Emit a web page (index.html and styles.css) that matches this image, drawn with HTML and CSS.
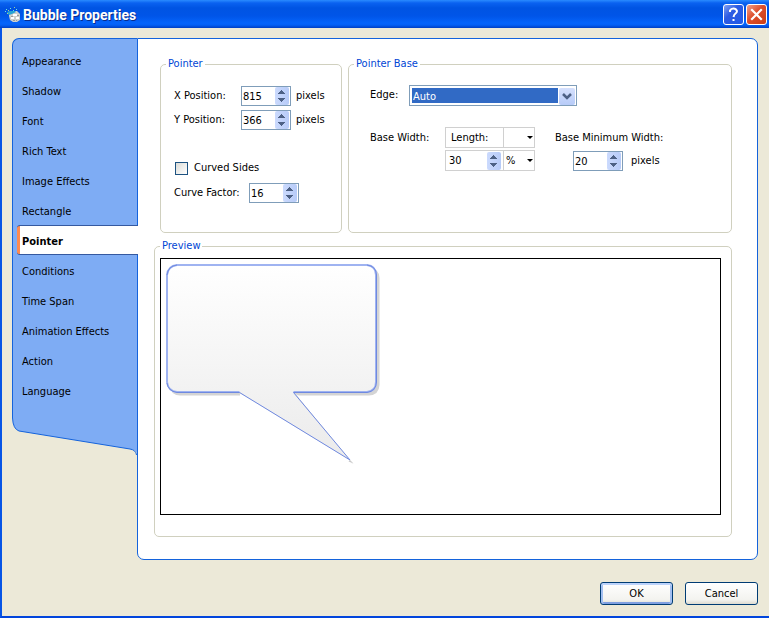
FILE: index.html
```html
<!DOCTYPE html>
<html lang="en">
<head>
<meta charset="utf-8">
<title>Bubble Properties</title>
<link rel="stylesheet" href="styles.css">
</head>
<body>
<svg class="defs" width="0" height="0" aria-hidden="true">
  <symbol id="up" viewBox="0 0 14 9"><path d="M6 3h1v1h1v1h1v1h1v1H3V6h1V5h1V4h1z" fill="#4d6185"/></symbol>
  <symbol id="down" viewBox="0 0 14 9"><path d="M3 2h7v1H9v1H8v1H7v1H6V5H5V4H4V3H3z" fill="#4d6185"/></symbol>
</svg>
<form class="window">
  <header class="titlebar">
    <svg class="app-icon" width="16" height="18" viewBox="0 0 16 18" aria-hidden="true">
      <path d="M4 7l3-2h5l3 3v6l-3 2H8l-3-2-1-4z" fill="#cfd0cc"/>
      <path d="M2 6l3-1h5l1 1-4 2-3 1z" fill="#27a5d5"/>
      <path d="M8 8h4v2H8zM11 11h3v2h-3zM6 11h3v2H6z" fill="#fff"/>
      <path d="M6 10h2v1H6zM12 9h2v1h-2zM8 14h2v1H8zM11 14h1v1h-1z" fill="#9a9c9c"/>
      <path d="M1 3h1v1H1zM5 2h1v1H5zM8 4h1v1H8zM0 5h1v1H0zM11 3h1v1h-1z" fill="#6fe0df"/>
      <path d="M3 4h1v1H3zM9 1h1v1H9zM2 7h1v1H2z" fill="#a8cb91"/>
    </svg>
    <h1>Bubble Properties</h1>
    <button type="button" class="caption" aria-label="Help">
      <svg width="19" height="19" viewBox="0 0 19 19"><path d="M6 7V5.500q1-2 3.500-2T13 6q0 1.500-1.500 2.500T9.500 12M9.500 14v2" fill="none" stroke="#fff" stroke-width="2"/></svg>
    </button>
    <button type="button" class="caption close" aria-label="Close">
      <svg width="19" height="19" viewBox="0 0 19 19"><path d="M5 5l9 9M14 5l-9 9" fill="none" stroke="#fff" stroke-width="2.200" stroke-linecap="square"/></svg>
    </button>
  </header>
  <main class="content">
    <nav class="side">
      <ul>
        <li><a href="#appearance">Appearance</a></li>
        <li><a href="#shadow">Shadow</a></li>
        <li><a href="#font">Font</a></li>
        <li><a href="#rich-text">Rich Text</a></li>
        <li><a href="#image-effects">Image Effects</a></li>
        <li><a href="#rectangle">Rectangle</a></li>
        <li class="active"><a href="#pointer" aria-current="page">Pointer</a></li>
        <li><a href="#conditions">Conditions</a></li>
        <li><a href="#time-span">Time Span</a></li>
        <li><a href="#animation-effects">Animation Effects</a></li>
        <li><a href="#action">Action</a></li>
        <li><a href="#language">Language</a></li>
      </ul>
      <svg class="side-foot" width="125" height="50" viewBox="0 0 125 50" aria-hidden="true">
        <path d="M0.500 0V13Q1 24 7 26L118 44Q125 45 125.500 50V0" fill="#7eacf4"/>
        <path d="M0.500 0V13Q1 24 7 26L118 44Q124 45 124.500 50" fill="none" stroke="#1463dc"/>
      </svg>
    </nav>
    <section class="panel" id="pointer">
      <div class="groups">
        <fieldset class="group pointer">
          <legend>Pointer</legend>
          <div class="row">
            <label class="name" for="x">X Position:</label>
            <span class="spin"><input id="x" value="815"><span class="arrows"><button type="button" aria-label="Increase"><svg width="14" height="9"><use href="#up"/></svg></button><button type="button" aria-label="Decrease"><svg width="14" height="9"><use href="#down"/></svg></button></span></span>
            <span class="unit">pixels</span>
          </div>
          <div class="row">
            <label class="name" for="y">Y Position:</label>
            <span class="spin"><input id="y" value="366"><span class="arrows"><button type="button" aria-label="Increase"><svg width="14" height="9"><use href="#up"/></svg></button><button type="button" aria-label="Decrease"><svg width="14" height="9"><use href="#down"/></svg></button></span></span>
            <span class="unit">pixels</span>
          </div>
          <div class="row check">
            <input type="checkbox" id="curved"><label for="curved">Curved Sides</label>
          </div>
          <div class="row">
            <label class="name wide" for="factor">Curve Factor:</label>
            <span class="spin"><input id="factor" value="16"><span class="arrows"><button type="button" aria-label="Increase"><svg width="14" height="9"><use href="#up"/></svg></button><button type="button" aria-label="Decrease"><svg width="14" height="9"><use href="#down"/></svg></button></span></span>
          </div>
        </fieldset>
        <fieldset class="group base">
          <legend>Pointer Base</legend>
          <div class="row">
            <label class="edge-name" for="edge">Edge:</label>
            <span class="combo"><select id="edge"><option>Auto</option></select><svg width="16" height="17" viewBox="0 0 16 17" aria-hidden="true"><path d="M4 6l4 4 4-4" fill="none" stroke="#4d6185" stroke-width="2.500"/></svg></span>
          </div>
          <div class="sizes">
            <label class="size-name" for="width">Base Width:</label>
            <div class="measure">
              <div class="cell-row">
                <label class="cell caption-cell" for="kind">Length:</label>
                <span class="cell pick"><select id="kind"><option label=" "></option></select></span>
              </div>
              <div class="cell-row">
                <span class="cell value-cell"><input id="width" value="30"><span class="arrows"><button type="button" aria-label="Increase"><svg width="14" height="9"><use href="#up"/></svg></button><button type="button" aria-label="Decrease"><svg width="14" height="9"><use href="#down"/></svg></button></span></span>
                <span class="cell pick"><select aria-label="Unit"><option>%</option></select></span>
              </div>
            </div>
            <div class="minimum">
              <label for="min">Base Minimum Width:</label>
              <div class="row">
                <span class="spin"><input id="min" value="20"><span class="arrows"><button type="button" aria-label="Increase"><svg width="14" height="9"><use href="#up"/></svg></button><button type="button" aria-label="Decrease"><svg width="14" height="9"><use href="#down"/></svg></button></span></span>
                <span class="unit far">pixels</span>
              </div>
            </div>
          </div>
        </fieldset>
      </div>
      <fieldset class="group preview">
        <legend>Preview</legend>
        <div class="canvas">
          <svg width="230" height="210" viewBox="161 259 230 210" role="img" aria-label="Bubble preview">
            <defs><linearGradient id="fill" x1="0" y1="0" x2="0" y2="1"><stop offset="0" stop-color="#fff"/><stop offset="1" stop-color="#ebebeb"/></linearGradient></defs>
            <path d="M178 268H369Q379 268 379.500 278V385Q379 395 369 395.500H297L353 464L245 395.500H180Q170 395 170 385V278Q170 268 178 268Z" fill="#d4d4d4"/>
            <path d="M296 394L353 464L350 460L240 393V400L340 459L353 464L299 396" fill="#fff"/>
            <path d="M350 460l3.500 3.500-5-2z" fill="#c8c8c8"/>
            <path d="M177 265H367Q376.500 266 377 275V382Q376 391 367 392H293.500L350 460L239.500 392H177Q168 391 167 382V275Q168 266 177 265Z" fill="url(#fill)"/>
            <path d="M239.500 392H177Q168 391 167 382V275Q168 266 177 265H367Q376 266 376 275V382Q376 391 367 392H293.500" fill="none" stroke="#9fb3f1" stroke-width="2"/>
            <path d="M167 383Q168 391 177 392.500H239.500L350 460L293.500 392.500H367Q376 391 376.500 382V275Q376 266 367 265M167 275Q168 266 177 265" fill="none" stroke="#6f89e0"/>
          </svg>
        </div>
      </fieldset>
    </section>
  </main>
  <footer class="actions">
    <button type="submit" class="push default">OK</button>
    <button type="button" class="push">Cancel</button>
  </footer>
</form>
</body>
</html>
```
FILE: styles.css
```css
* { box-sizing: border-box; }

body {
  margin: 0;
  font: 11px/14px "DejaVu Sans Condensed", "DejaVu Sans", sans-serif;
  color: #000;
  background: #ece9d8;
}

input, select, button { font: inherit; color: inherit; margin: 0; padding: 0; border: 0; }
svg { display: block; }
.defs { position: absolute; }

.window {
  display: flex;
  flex-direction: column;
  min-height: 100vh;
  border-left: 2px solid #0755e6;
  border-bottom: 2px solid #0145dc;
}

.titlebar {
  display: flex;
  align-items: center;
  gap: 2px;
  height: 28px;
  margin-left: -2px;
  padding: 1px 2px 0 5px;
  background: linear-gradient(#2a8bff 0, #0a62f0 3px, #0054e3 8px, #0055e8 16px, #0564fb 23px, #0460f5 25px, #003fc4 28px);
}

.titlebar h1 {
  flex: 1;
  margin: 0;
  font: bold 14px/20px Roboto, sans-serif;
  color: #fff;
  text-shadow: 1px 1px #0a2d8c;
}

.caption {
  width: 21px;
  height: 21px;
  border: 1px solid #fff;
  border-radius: 3px;
  background: linear-gradient(135deg, #82a2f3, #2c5be2 40%, #225ae8);
}

.close { background: linear-gradient(135deg, #f0a18b, #dd4e2b 45%, #c93e16); }

.content {
  display: flex;
  flex: 1;
  align-items: stretch;
  padding: 10px 11px 0 10px;
}

.side { width: 125px; flex: none; }

.side ul {
  list-style: none;
  margin: 0;
  padding: 6px 0 0;
  border-top: 1px solid #1463dc;
  border-left: 1px solid #1463dc;
  border-top-left-radius: 7px;
  background: #7eacf4;
}

.side a {
  display: block;
  padding-left: 9px;
  line-height: 34px;
  height: 30px;
  color: #000;
  text-decoration: none;
}

.side .active {
  position: relative;
  margin: 0 -1px 0 4px;
  border: solid #35599f;
  border-width: 1px 0;
  border-radius: 3px 0 0 3px;
  background: linear-gradient(90deg, #ff8a50 3px, #fff 3px);
  font-weight: bold;
}

.side .active a { height: 28px; line-height: 32px; padding-left: 5px; }

.panel {
  display: flex;
  flex: 1;
  flex-direction: column;
  gap: 6px;
  padding: 18px 25px 22px 16px;
  border: 1px solid #1463dc;
  border-radius: 0 7px 7px 7px;
  background: #fff;
}

.groups { display: flex; gap: 6px; padding-left: 6px; }

.group {
  --inset: 5px;
  min-width: 0;
  margin: 0;
  padding: 0 0 0 var(--inset);
  border: 1px solid #d0d0bf;
  border-radius: 5px;
}

.group legend { margin-left: calc(5px - var(--inset)); padding: 0 2px; line-height: 16px; color: #0046d5; }

.pointer { --inset: 13px; flex: none; width: 182px; height: 177px; margin-top: -1px; padding-top: 14px; }
.base { --inset: 21px; flex: 1; margin-top: -1px; padding-top: 13px; }

.row { display: flex; align-items: center; height: 20px; }
.pointer .row { margin-bottom: 4px; }
.pointer .check { margin: 28px 0 5px; }
.name { width: 67px; }
.name.wide { width: 75px; }
.unit { margin-left: 5px; }
.unit.far { margin-left: 8px; }

.spin {
  display: flex;
  width: 50px;
  height: 20px;
  padding: 0 1px;
  border: 1px solid #7f9db9;
  background: #fff;
}

.spin input, .value-cell input { flex: 1; width: 0; min-width: 0; height: 18px; background: none; outline: 0; }

.arrows { flex: none; width: 14px; height: 18px; border-radius: 2px; background: linear-gradient(90deg, #cbdafd, #b7cbf8); }
.arrows button { display: block; width: 14px; height: 9px; background: none; }

.check { gap: 6px; padding-left: 1px; }
.check input {
  appearance: none;
  width: 13px;
  height: 13px;
  border: 1px solid #1d5281;
  background: linear-gradient(135deg, #dcdcd7, #fff);
}

.edge-name { width: 39px; }

.combo {
  display: flex;
  gap: 1px;
  width: 168px;
  height: 21px;
  padding: 2px 1px;
  border: 1px solid #7f9db9;
  background: #fff;
}

.combo select {
  appearance: none;
  flex: 1;
  margin-left: 1px;
  padding: 2px 0 0 1px;
  border-radius: 0;
  background: #316ac5;
  color: #fff;
}

.combo svg { border-radius: 2px; background: linear-gradient(#d5e0fd, #b7cbf8); }

.sizes { display: flex; padding-top: 22px; }
.size-name { width: 75px; padding-top: 4px; }
.measure { display: grid; gap: 2px; width: 90px; align-content: start; }
.cell-row { display: flex; height: 21px; border: 1px solid #d0d0d0; }
.cell { display: flex; align-items: center; }
.caption-cell, .value-cell { width: 58px; border-right: 1px solid #d0d0d0; }
.caption-cell { padding-left: 5px; }
.value-cell { padding: 0 2px 0 3px; }

.pick { flex: 1; position: relative; }
.pick select { appearance: none; width: 100%; height: 19px; padding-left: 2px; background: none; }
.pick::after {
  content: "";
  position: absolute;
  right: 1px;
  top: 8px;
  border: solid transparent;
  border-width: 3px 3px 0;
  border-top-color: #000;
  pointer-events: none;
}

.minimum { padding: 4px 0 0 20px; }
.minimum .row { margin: 6px 0 0 18px; }

.preview { display: flex; flex-direction: column; flex: 1; margin-top: -1px; padding: 4px 10px 21px var(--inset); }
.canvas { height: 100%; min-height: 257px; border: 1px solid #000; background: #fff; }

.actions { display: flex; justify-content: flex-end; gap: 12px; padding: 22px 11px 11px; }

.push {
  width: 73px;
  height: 23px;
  border: 1px solid #003c74;
  border-radius: 3px;
  background: linear-gradient(#fff, #f3f3ef 80%, #dedbd0);
}

.default { box-shadow: inset 0 2px #bcd3fb, inset 2px 0 #a3bff0, inset -2px 0 #a3bff0, inset 0 -2px #7f9fe0; }
```
